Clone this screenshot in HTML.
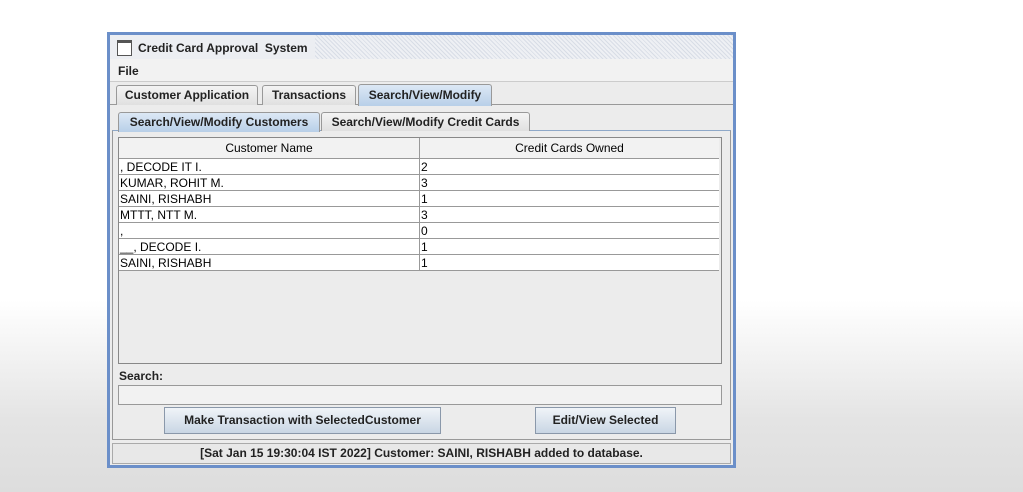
<!DOCTYPE html><html><head><style>
body{margin:0;width:1023px;height:492px;position:relative;overflow:hidden;font-family:"Liberation Sans",sans-serif;background:linear-gradient(#fff 0,#fff 300px,#e4e4e4 420px,#ddd 492px)}
.a{position:absolute}
.b{font-weight:bold;font-size:12px;color:#222}
.tab{position:absolute;border:1px solid #999;border-bottom:none;background:linear-gradient(#f4f4f4,#e0e0e0);font-weight:bold;font-size:12px;color:#222;text-align:center;border-radius:3px 3px 0 0}
.sel{background:linear-gradient(#dce8f5,#b8cfe8)}
.row{position:absolute;box-sizing:border-box;left:119px;width:600px;height:16px;border-bottom:1px solid #999;font-size:12px;line-height:16px;background:#fff}
.row span{position:absolute;left:1px}.row i{font-style:normal;position:absolute;left:302px}
.btn{position:absolute;border:1px solid #8a98aa;background:linear-gradient(#f0f4f8,#c9d6e4);font-weight:bold;font-size:12px;text-align:center;line-height:25px;color:#222}
</style></head><body>
<div class="a" style="left:107px;top:32px;width:623px;height:430px;border:3px solid #6b8fc9;background:#ececec"></div>
<div class="a" style="left:110px;top:35px;width:623px;height:24px;background:repeating-linear-gradient(45deg,#d8dde6 0 1px,#eef0f4 1px 3px)"></div>
<div class="a" style="left:110px;top:35px;width:205px;height:24px;background:#eceef2"></div>
<div class="a" style="left:117px;top:40px;width:13px;height:12px;border:1px solid #555;background:#fff;border-top-width:3px"></div>
<div class="a b" style="left:138px;top:41px">Credit Card Approval&nbsp; System</div>
<div class="a" style="left:110px;top:59px;width:623px;height:22px;background:#f2f2f2;border-bottom:1px solid #ccc"></div>
<div class="a b" style="left:118px;top:64px">File</div>
<div class="a" style="left:110px;top:104px;width:623px;height:1px;background:#999"></div>
<div class="tab" style="left:116px;top:85px;width:140px;height:19px;line-height:19px">Customer Application</div>
<div class="tab" style="left:262px;top:85px;width:92px;height:19px;line-height:19px">Transactions</div>
<div class="tab sel" style="left:358px;top:84px;width:132px;height:21px;line-height:21px">Search/View/Modify</div>
<div class="a" style="left:112px;top:130px;width:617px;height:308px;border:1px solid #999;border-top:1px solid #8ea8c8"></div>
<div class="tab sel" style="left:118px;top:112px;width:200px;height:19px;line-height:19px">Search/View/Modify Customers</div>
<div class="tab" style="left:321px;top:112px;width:207px;height:18px;line-height:18px">Search/View/Modify Credit Cards</div>
<div class="a" style="left:118px;top:137px;width:602px;height:225px;border:1px solid #888;background:#ececec"></div>
<div class="a" style="left:119px;top:138px;width:600px;height:20px;background:#f2f2f2;border-bottom:1px solid #999;font-size:12px;line-height:20px">
<div class="a" style="left:0;width:300px;text-align:center">Customer Name</div><div class="a" style="left:300px;top:0;width:1px;height:20px;background:#999"></div><div class="a" style="left:301px;width:299px;text-align:center">Credit Cards Owned</div></div>
<div class="row" style="top:159px"><span>, DECODE IT I.</span><i>2</i></div>
<div class="row" style="top:175px"><span>KUMAR, ROHIT M.</span><i>3</i></div>
<div class="row" style="top:191px"><span>SAINI, RISHABH</span><i>1</i></div>
<div class="row" style="top:207px"><span>MTTT, NTT M.</span><i>3</i></div>
<div class="row" style="top:223px"><span>,</span><i>0</i></div>
<div class="row" style="top:239px"><span>__, DECODE I.</span><i>1</i></div>
<div class="row" style="top:255px"><span>SAINI, RISHABH</span><i>1</i></div>
<div class="a" style="left:419px;top:158px;width:1px;height:113px;background:#999"></div>
<div class="a b" style="left:119px;top:369px">Search:</div>
<div class="a" style="left:118px;top:385px;width:602px;height:18px;border:1px solid #999;background:#f2f2f2"></div>
<div class="btn" style="left:164px;top:407px;width:275px;height:25px">Make Transaction with SelectedCustomer</div>
<div class="btn" style="left:535px;top:407px;width:139px;height:25px">Edit/View Selected</div>
<div class="a" style="left:112px;top:443px;width:617px;height:19px;border:1px solid #aaa;background:#e8e8e8;font-weight:bold;font-size:12px;line-height:19px;text-align:center;color:#222">[Sat Jan 15 19:30:04 IST 2022] Customer: SAINI, RISHABH added to database.</div>
</body></html>
